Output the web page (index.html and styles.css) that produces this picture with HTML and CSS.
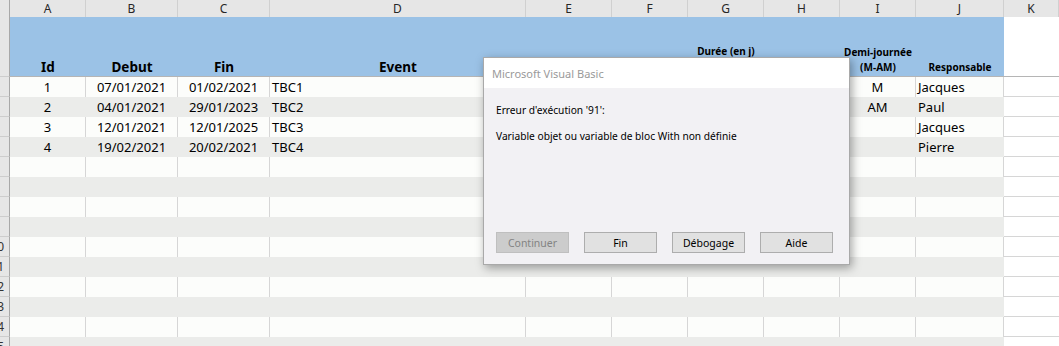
FILE: index.html
```html
<!DOCTYPE html>
<html lang="fr">
<head>
  <meta charset="UTF-8">
  <title>Planning - Excel</title>
  <link rel="stylesheet" href="styles.css">
</head>
<body>
  <div class="sheet">
    <!-- column letters -->
    <div class="row letters">
      <div class="corner"></div>
      <div>A</div><div>B</div><div>C</div><div>D</div><div>E</div><div>F</div>
      <div>G</div><div>H</div><div>I</div><div>J</div><div>K</div>
    </div>

    <!-- table header -->
    <div class="row head">
      <div class="rh"></div>
      <div class="hc">Id</div>
      <div class="hc">Debut</div>
      <div class="hc">Fin</div>
      <div class="hc">Event</div>
      <div class="hc"></div>
      <div class="hc"></div>
      <div class="hc small up">Durée (en j)</div>
      <div class="hc"></div>
      <div class="hc small">Demi-journée<br>(M-AM)</div>
      <div class="hc small">Responsable</div>
      <div class="out"></div>
    </div>

    <!-- data -->
    <div class="row">
      <div class="rh"></div>
      <div class="c mid">1</div>
      <div class="c mid">07/01/2021</div>
      <div class="c mid">01/02/2021</div>
      <div class="c">TBC1</div>
      <div class="c"></div><div class="c"></div><div class="c"></div><div class="c"></div>
      <div class="c mid">M</div>
      <div class="c">Jacques</div>
      <div class="out"></div>
    </div>
    <div class="row alt">
      <div class="rh"></div>
      <div class="c mid">2</div>
      <div class="c mid">04/01/2021</div>
      <div class="c mid">29/01/2023</div>
      <div class="c">TBC2</div>
      <div class="c"></div><div class="c"></div><div class="c"></div><div class="c"></div>
      <div class="c mid">AM</div>
      <div class="c">Paul</div>
      <div class="out"></div>
    </div>
    <div class="row">
      <div class="rh"></div>
      <div class="c mid">3</div>
      <div class="c mid">12/01/2021</div>
      <div class="c mid">12/01/2025</div>
      <div class="c">TBC3</div>
      <div class="c"></div><div class="c"></div><div class="c"></div><div class="c"></div>
      <div class="c"></div>
      <div class="c">Jacques</div>
      <div class="out"></div>
    </div>
    <div class="row alt">
      <div class="rh"></div>
      <div class="c mid">4</div>
      <div class="c mid">19/02/2021</div>
      <div class="c mid">20/02/2021</div>
      <div class="c">TBC4</div>
      <div class="c"></div><div class="c"></div><div class="c"></div><div class="c"></div>
      <div class="c"></div>
      <div class="c">Pierre</div>
      <div class="out"></div>
    </div>

    <!-- empty rows -->
    <div class="row"><div class="rh"></div><div class="c"></div><div class="c"></div><div class="c"></div><div class="c"></div><div class="c"></div><div class="c"></div><div class="c"></div><div class="c"></div><div class="c"></div><div class="c"></div><div class="out"></div></div>
    <div class="row alt"><div class="rh"></div><div class="c"></div><div class="c"></div><div class="c"></div><div class="c"></div><div class="c"></div><div class="c"></div><div class="c"></div><div class="c"></div><div class="c"></div><div class="c"></div><div class="out"></div></div>
    <div class="row"><div class="rh"></div><div class="c"></div><div class="c"></div><div class="c"></div><div class="c"></div><div class="c"></div><div class="c"></div><div class="c"></div><div class="c"></div><div class="c"></div><div class="c"></div><div class="out"></div></div>
    <div class="row alt"><div class="rh"></div><div class="c"></div><div class="c"></div><div class="c"></div><div class="c"></div><div class="c"></div><div class="c"></div><div class="c"></div><div class="c"></div><div class="c"></div><div class="c"></div><div class="out"></div></div>
    <div class="row"><div class="rh">10</div><div class="c"></div><div class="c"></div><div class="c"></div><div class="c"></div><div class="c"></div><div class="c"></div><div class="c"></div><div class="c"></div><div class="c"></div><div class="c"></div><div class="out"></div></div>
    <div class="row alt"><div class="rh">11</div><div class="c"></div><div class="c"></div><div class="c"></div><div class="c"></div><div class="c"></div><div class="c"></div><div class="c"></div><div class="c"></div><div class="c"></div><div class="c"></div><div class="out"></div></div>
    <div class="row"><div class="rh">12</div><div class="c"></div><div class="c"></div><div class="c"></div><div class="c"></div><div class="c"></div><div class="c"></div><div class="c"></div><div class="c"></div><div class="c"></div><div class="c"></div><div class="out"></div></div>
    <div class="row alt"><div class="rh">13</div><div class="c"></div><div class="c"></div><div class="c"></div><div class="c"></div><div class="c"></div><div class="c"></div><div class="c"></div><div class="c"></div><div class="c"></div><div class="c"></div><div class="out"></div></div>
    <div class="row"><div class="rh">14</div><div class="c"></div><div class="c"></div><div class="c"></div><div class="c"></div><div class="c"></div><div class="c"></div><div class="c"></div><div class="c"></div><div class="c"></div><div class="c"></div><div class="out"></div></div>
    <div class="row alt"><div class="rh">15</div><div class="c"></div><div class="c"></div><div class="c"></div><div class="c"></div><div class="c"></div><div class="c"></div><div class="c"></div><div class="c"></div><div class="c"></div><div class="c"></div><div class="out"></div></div>
  </div>

  <!-- VBA runtime error box -->
  <div class="dialog">
    <div class="dialog-title">Microsoft Visual Basic</div>
    <div class="dialog-body">
      <p>Erreur d'exécution '91':</p>
      <p>Variable objet ou variable de bloc With non définie</p>
      <div class="buttons">
        <button disabled>Continuer</button>
        <button>Fin</button>
        <button>Débogage</button>
        <button>Aide</button>
      </div>
    </div>
  </div>
</body>
</html>
```

FILE: styles.css
```css
body {
  margin: 0;
  font-family: "Noto Sans", sans-serif;
  background: #ffffff;
  width: 1059px;
  height: 346px;
  overflow: hidden;
  position: relative;
}

.row {
  display: grid;
  grid-template-columns: 10px 76px 92px 92px 256px 86px 76px 76px 76px 76px 88px 1fr;
  height: 20px;
}

.row > div {
  box-sizing: border-box;
  min-width: 0;
}

/* column letters */
.letters {
  height: 17px;
  background: #e6e6e6;
  font-size: 12px;
  color: #262626;
}

.letters > div {
  display: flex;
  justify-content: center;
  align-items: center;
  border-right: 1px solid #d0d0d0;
  border-bottom: 1px solid #b4b4b4;
}

.letters .corner {
  border-right-color: #a8a8a8;
}

/* row numbers */
.rh {
  background: #e6e6e6;
  border-right: 1px solid #a8a8a8;
  border-bottom: 1px solid #cdcdcd;
  display: flex;
  justify-content: flex-end;
  align-items: center;
  padding-right: 5px;
  overflow: hidden;
  font-size: 12px;
  color: #333;
  white-space: nowrap;
}

/* header row */
.head {
  height: 60px;
}

.hc {
  background: #9bc2e6;
  border-bottom: 1px solid #b5b5b5;
  display: flex;
  justify-content: center;
  align-items: flex-end;
  text-align: center;
  font-weight: 700;
  font-size: 13.5px;
  line-height: 18px;
  padding-bottom: 0;
  color: #000;
}

.hc.small {
  font-size: 10px;
  line-height: 15px;
  padding-bottom: 1px;
}

.hc.up {
  padding-bottom: 17px;
}

.head .out {
  border-bottom: 1px solid #b5b5b5;
}

/* data cells */
.c {
  background: #fcfdfb;
  border-right: 1px solid #d6d6d6;
  display: flex;
  align-items: center;
  padding: 0 2px;
  font-size: 13px;
  color: #000;
  white-space: nowrap;
}

.c.mid {
  justify-content: center;
}

.alt .c {
  background: #ebecea;
  border-right-color: #ebecea;
}

.out {
  background: #ffffff;
  border-bottom: 1px solid #d6d6d6;
}

/* dialog */
.dialog {
  position: absolute;
  left: 483px;
  top: 57px;
  width: 367px;
  height: 208px;
  box-sizing: border-box;
  border: 1px solid #a9a9a9;
  background: #f2f1f4;
  box-shadow: 2px 3px 9px rgba(0, 0, 0, 0.35);
  display: flex;
  flex-direction: column;
}

.dialog-title {
  height: 30px;
  background: #ffffff;
  color: #9a9a9a;
  font-size: 11px;
  padding-left: 8px;
  display: flex;
  align-items: center;
}

.dialog-body {
  flex: 1;
  display: flex;
  flex-direction: column;
  padding: 15px 15px 11px 12px;
  font-size: 10.2px;
  color: #000;
}

.dialog-body p {
  margin: 0 0 12px 0;
  line-height: 14px;
}

.buttons {
  margin-top: auto;
  display: flex;
  gap: 15px;
}

.buttons button {
  width: 73px;
  height: 21px;
  padding: 0;
  background: #e1e1e1;
  border: 1px solid #adadad;
  font-family: "Noto Sans", sans-serif;
  font-size: 10.5px;
  color: #000;
}

.buttons button:disabled {
  background: #cccccc;
  border-color: #bfbfbf;
  color: #838383;
}
```
